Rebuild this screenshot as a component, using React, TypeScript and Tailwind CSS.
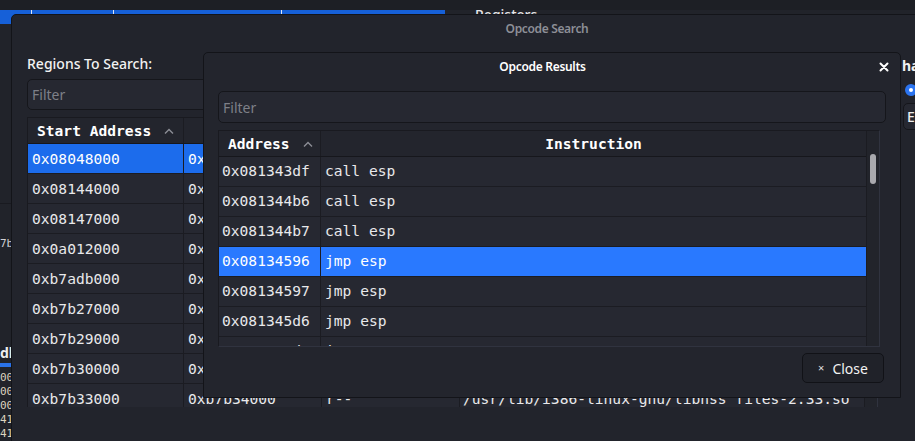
import React from "react";

const regions: [string, string, string, string][] = [
  ["0x08048000", "0x08144000", "r-x", "/usr/bin/vuln"],
  ["0x08144000", "0x08147000", "r--", "/usr/bin/vuln"],
  ["0x08147000", "0x08148000", "rw-", "/usr/bin/vuln"],
  ["0x0a012000", "0x0a034000", "rw-", "[heap]"],
  ["0xb7adb000", "0xb7b27000", "rw-", ""],
  ["0xb7b27000", "0xb7b29000", "r--", "/usr/lib/i386-linux-gnu/libnss_files-2.33.so"],
  ["0xb7b29000", "0xb7b30000", "r-x", "/usr/lib/i386-linux-gnu/libnss_files-2.33.so"],
  ["0xb7b30000", "0xb7b33000", "r--", "/usr/lib/i386-linux-gnu/libnss_files-2.33.so"],
  ["0xb7b33000", "0xb7b34000", "r--", "/usr/lib/i386-linux-gnu/libnss_files-2.33.so"],
];

const results: [string, string][] = [
  ["0x081343df", "call esp"],
  ["0x081344b6", "call esp"],
  ["0x081344b7", "call esp"],
  ["0x08134596", "jmp esp"],
  ["0x08134597", "jmp esp"],
  ["0x081345d6", "jmp esp"],
  ["0x081345d7", "jmp esp"],
];

function SortUp() {
  return (
    <svg width="10" height="6" viewBox="0 0 10 6" className="shrink-0">
      <polyline points="1,5.5 5,1.5 9,5.5" fill="none" stroke="#8c8e96" strokeWidth="1.4" />
    </svg>
  );
}

export default function App() {
  return (
    <div className="relative w-[915px] h-[441px] overflow-hidden bg-[#21232a] font-['Noto_Sans',sans-serif]">
      {/* background application */}
      <div className="flex flex-col h-full">
        <div className="h-[10px] bg-[#1d1f25] shrink-0" />
        <div className="flex h-[14px] shrink-0">
          <div className="w-[445px] shrink-0 bg-[#1660d8] flex items-start">
            <div className="w-[32px] h-full border-r border-[#dfe6f5]" />
            <div className="w-[81px] h-full" />
            <div className="w-[168px] h-full border-l border-[#dfe6f5]" />
            <div className="w-[163px] h-full border-l border-[#dfe6f5]" />
          </div>
          <div className="pl-[30px] -mt-[3px] text-[14px] font-medium text-[#e6e6e8] leading-[16px]">Registers</div>
        </div>
        <div className="flex flex-col w-[11px] overflow-hidden font-['DejaVu_Sans_Mono',monospace]">
          <div className="h-[183px] border-b border-[#191a20]" />
          <div className="mt-[33px] flex items-center h-[12px]">
            <span className="text-[11px] text-[#d0d0d4] leading-none">7b</span>
          </div>
          <div className="mt-[96px] text-[14px] font-bold text-[#eeeeee] leading-[16px] font-['Noto_Sans',sans-serif]">db</div>
          <div className="mt-[2px] h-[4px] bg-[#2a72e8]" />
          <div className="mt-[4px] flex flex-col text-[11px] leading-[14px] text-[#ddd3bf]">
            <span>00</span>
            <span>00</span>
            <span>00</span>
            <span>41</span>
            <span>41</span>
          </div>
        </div>
      </div>

      {/* Opcode Search dialog */}
      <div className="absolute left-[11px] top-[14px] w-[1072px] h-[470px] bg-[#22242c] border border-[#131419] rounded-tl-[5px] flex flex-col">
        <div className="h-[27px] flex items-center justify-center text-[12px] font-semibold tracking-[-0.35px] text-[#8d8f97] shrink-0">
          Opcode Search
        </div>
        <div className="flex pl-[15px] pt-[12px]">
          <div className="w-[851px] shrink-0 flex flex-col">
            <div className="text-[14px] font-medium text-[#f2f2f2] leading-[19px] h-[25px]">Regions To Search:</div>
            <div className="h-[31px] w-[600px] rounded-[5px] border border-[#15161b] bg-[#262831] flex items-center pl-[4px] text-[14px] text-[#7e8088]">
              Filter
            </div>
            <div className="mt-[7px] h-[290px] flex border-l border-t border-[#191a20] border-r border-b-0 border-r-[#30333f] overflow-hidden">
              <div className="flex-1 flex flex-col overflow-hidden font-['DejaVu_Sans_Mono',monospace] text-[14.6px]">
                <div className="h-[26px] shrink-0 flex bg-[#23252d] border-b border-[#16171c] font-bold text-white">
                  <div className="w-[156px] border-r border-[#1b1c22] flex items-center pl-[9px] pr-[9px] justify-between">
                    <span>Start Address</span>
                    <SortUp />
                  </div>
                  <div className="w-[138px] border-r border-[#1b1c22] flex items-center justify-center">End Address</div>
                  <div className="w-[138px] border-r border-[#1b1c22] flex items-center justify-center">Permissions</div>
                  <div className="flex-1 flex items-center justify-center">Name</div>
                </div>
                {regions.map((r, i) => (
                  <div
                    key={i}
                    className={
                      i === 0
                        ? "h-[30px] shrink-0 flex bg-[#1c6cec] text-white"
                        : "h-[30px] shrink-0 flex bg-[#262831] text-[#e9e9eb]"
                    }
                  >
                    <div className="w-[156px] border-r border-b border-[#1b1c22] flex items-center pl-[4px]">{r[0]}</div>
                    <div className="w-[138px] border-r border-b border-[#1b1c22] flex items-center pl-[4px]">{r[1]}</div>
                    <div className="w-[138px] border-r border-b border-[#1b1c22] flex items-center pl-[4px]">{r[2]}</div>
                    <div className="flex-1 border-b border-[#1b1c22] flex items-center pl-[3px] whitespace-nowrap overflow-hidden">{r[3]}</div>
                  </div>
                ))}
              </div>
              <div className="w-[13px] bg-[#22242b] border-l border-[#1b1c22]" />
            </div>
          </div>
          <div className="ml-[24px] pt-[3px] flex flex-col shrink-0">
            <div className="text-[14px] font-bold text-[#f0f0f0] leading-[19px] h-[23px] -mt-[1px] whitespace-nowrap">hardware</div>
            <div className="mt-[2px] flex items-center gap-[6px] h-[18px] ml-[3px]">
              <div className="w-[12px] h-[12px] rounded-full bg-[#2b74f0] flex items-center justify-center">
                <div className="w-[4px] h-[4px] rounded-full bg-white" />
              </div>
              <span className="text-[14px] text-[#eee]">Option</span>
            </div>
            <div className="mt-[4px] ml-[1px] h-[27px] w-[200px] rounded-[5px] border border-[#15161b] bg-[#262831] flex items-center pl-[3px] text-[14px] text-[#eee] font-medium tracking-[1px]">
              ESP
            </div>
          </div>
        </div>
      </div>

      {/* Opcode Results dialog */}
      <div className="absolute left-[203px] top-[52px] w-[698px] h-[346px] bg-[#23252d] border border-[#131419] rounded-t-[5px] flex flex-col">
        <div className="h-[27px] shrink-0 flex items-center">
          <div className="flex-1 flex justify-center pl-[11px] text-[12px] font-semibold tracking-[-0.3px] text-white">Opcode Results</div>
          <div className="w-[30px] flex items-center justify-center pr-[2px]">
            <svg width="10" height="10" viewBox="0 0 10 10">
              <path d="M1.5 1.5 L8.5 8.5 M8.5 1.5 L1.5 8.5" stroke="#ffffff" strokeWidth="2" strokeLinecap="round" />
            </svg>
          </div>
        </div>
        <div className="flex flex-col pl-[14px] pr-[14px] pt-[11px]">
          <div className="h-[32px] rounded-[5px] border border-[#15161b] bg-[#262831] flex items-center pl-[4px] text-[14px] text-[#7e8088]">
            Filter
          </div>
          <div className="mt-[7px] mr-[6px] h-[217px] flex border-l border-t border-[#191a20] border-r border-b border-r-[#30333f] border-b-[#30333f] overflow-hidden">
            <div className="flex-1 flex flex-col overflow-hidden font-['DejaVu_Sans_Mono',monospace] text-[14.6px]">
              <div className="h-[26px] shrink-0 flex bg-[#23252d] border-b border-[#16171c] font-bold text-white">
                <div className="w-[102px] border-r border-[#1b1c22] flex items-center pl-[9px] pr-[7px] justify-between">
                  <span>Address</span>
                  <SortUp />
                </div>
                <div className="flex-1 flex items-center justify-center">Instruction</div>
              </div>
              {results.map((r, i) => (
                <div
                  key={i}
                  className={
                    i === 3
                      ? "h-[30px] shrink-0 flex bg-[#2979ff] text-white"
                      : "h-[30px] shrink-0 flex bg-[#262831] text-[#e9e9eb]"
                  }
                >
                  <div className="w-[102px] border-r border-b border-[#1b1c22] flex items-center pl-[3px] pb-[1px]">{r[0]}</div>
                  <div className="flex-1 border-b border-[#1b1c22] flex items-center pl-[4px] pb-[1px]">{r[1]}</div>
                </div>
              ))}
            </div>
            <div className="w-[13px] bg-[#22242b] border-l border-[#1b1c22] flex justify-center pt-[23px]">
              <div className="w-[6px] h-[30px] rounded-full bg-[#a9a9ae]" />
            </div>
          </div>
          <div className="flex justify-end mt-[6px] mr-[2px]">
            <div className="w-[82px] h-[30px] rounded-[5px] border border-[#111217] bg-[#202229] flex items-center justify-center gap-[8px] text-[14px] text-[#f2f2f2]">
              <span className="text-[11px] text-[#e0e0e0]">×</span>
              <span>Close</span>
            </div>
          </div>
        </div>
      </div>
    </div>
  );
}
